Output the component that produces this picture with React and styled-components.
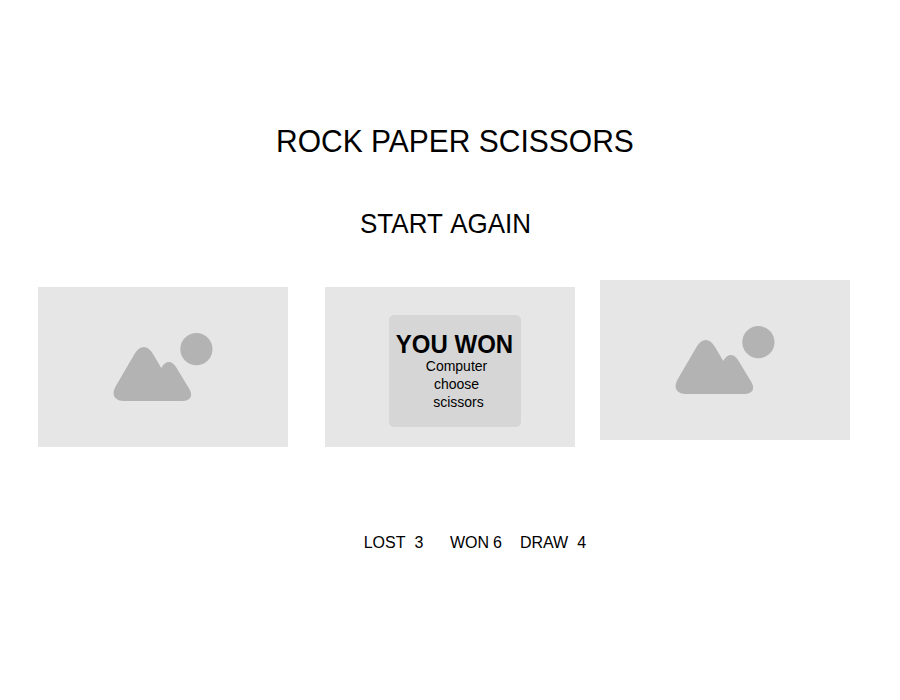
import React from "react";
import styled, { createGlobalStyle } from "styled-components";

const GlobalStyle = createGlobalStyle`
  body {
    margin: 0;
    background: #fff;
    color: #000;
    font-family: "Liberation Sans", Arial, sans-serif;
  }
`;

const Page = styled.main`
  display: flex;
  flex-direction: column;
  width: 900px;
  height: 700px;
  box-sizing: border-box;
  padding-top: 124px;
  overflow: hidden;
`;

const Title = styled.h1`
  margin: 0 0 0 276px;
  font-size: 30px;
  line-height: 36px;
  font-weight: 400;
  white-space: nowrap;
  transform: scaleY(1.06);
  transform-origin: 0 28px;
`;

const StartAgain = styled.a`
  margin: 48px 0 0 360px;
  font-size: 26px;
  line-height: 32px;
  word-spacing: 2px;
  white-space: nowrap;
  transform: scaleY(1.05);
  transform-origin: 0 25px;
`;

const Board = styled.section`
  display: grid;
  grid-template-columns: 250px 250px 250px;
  column-gap: 37px;
  margin: 40px 0 0 38px;
`;

const Card = styled.div`
  display: flex;
  justify-content: center;
  width: 250px;
  height: 160px;
  background: #e6e6e6;
  margin-top: ${(p) => (p.$raised ? 0 : 7)}px;
  margin-left: ${(p) => (p.$raised ? -12 : 0)}px;
`;

const Picture = styled.svg`
  display: block;
  width: 250px;
  height: 160px;
  fill: #b3b3b3;
`;

const Result = styled.div`
  display: flex;
  flex-direction: column;
  align-items: center;
  box-sizing: border-box;
  width: 132px;
  height: 112px;
  margin: 28px 0 0 10px;
  padding-top: 17px;
  border-radius: 5px;
  background: #d6d6d6;
`;

const Verdict = styled.strong`
  margin: 0 1px -1px 0;
  font-size: 24px;
  line-height: 26px;
  white-space: nowrap;
  transform: scaleY(1.04);
  transform-origin: 0 21px;
`;

const Detail = styled.span`
  font-size: 14px;
  line-height: 18px;
  margin-left: ${(p) => p.$shift}px;
`;

const Scores = styled.footer`
  display: flex;
  margin: 87px 0 0 363.7px;
  font-size: 16px;
  line-height: 18px;
`;

const Score = styled.span`
  display: flex;
  gap: ${(p) => p.$gap}px;
  margin-right: ${(p) => p.$after}px;
`;

function Placeholder() {
  return (
    <Picture viewBox="0 0 250 160" aria-hidden="true">
      <circle cx="158.4" cy="62.2" r="16.1" />
      <path d="M78 98.7 L96.5 67 C101.8 57.6 109.8 57.6 115 67 L123.3 81 C127.5 73.3 133.6 73.2 138 80 L151.5 102.3 C155.5 109.2 152 114 144.7 114 H87 C76.5 114 72.7 107.6 78 98.7 Z" />
    </Picture>
  );
}

export default function App() {
  return (
    <>
      <GlobalStyle />
      <Page>
        <Title>ROCK PAPER SCISSORS</Title>
        <StartAgain>START AGAIN</StartAgain>
        <Board>
          <Card><Placeholder /></Card>
          <Card>
            <Result>
              <Verdict>YOU WON</Verdict>
              <Detail $shift={3}>Computer</Detail>
              <Detail $shift={3}>choose</Detail>
              <Detail $shift={7}>scissors</Detail>
            </Result>
          </Card>
          <Card $raised><Placeholder /></Card>
        </Board>
        <Scores>
          <Score $gap={9} $after={26.5}><span>LOST</span><span>3</span></Score>
          <Score $gap={4} $after={18}><span>WON</span><span>6</span></Score>
          <Score $gap={9} $after={0}><span>DRAW</span><span>4</span></Score>
        </Scores>
      </Page>
    </>
  );
}
